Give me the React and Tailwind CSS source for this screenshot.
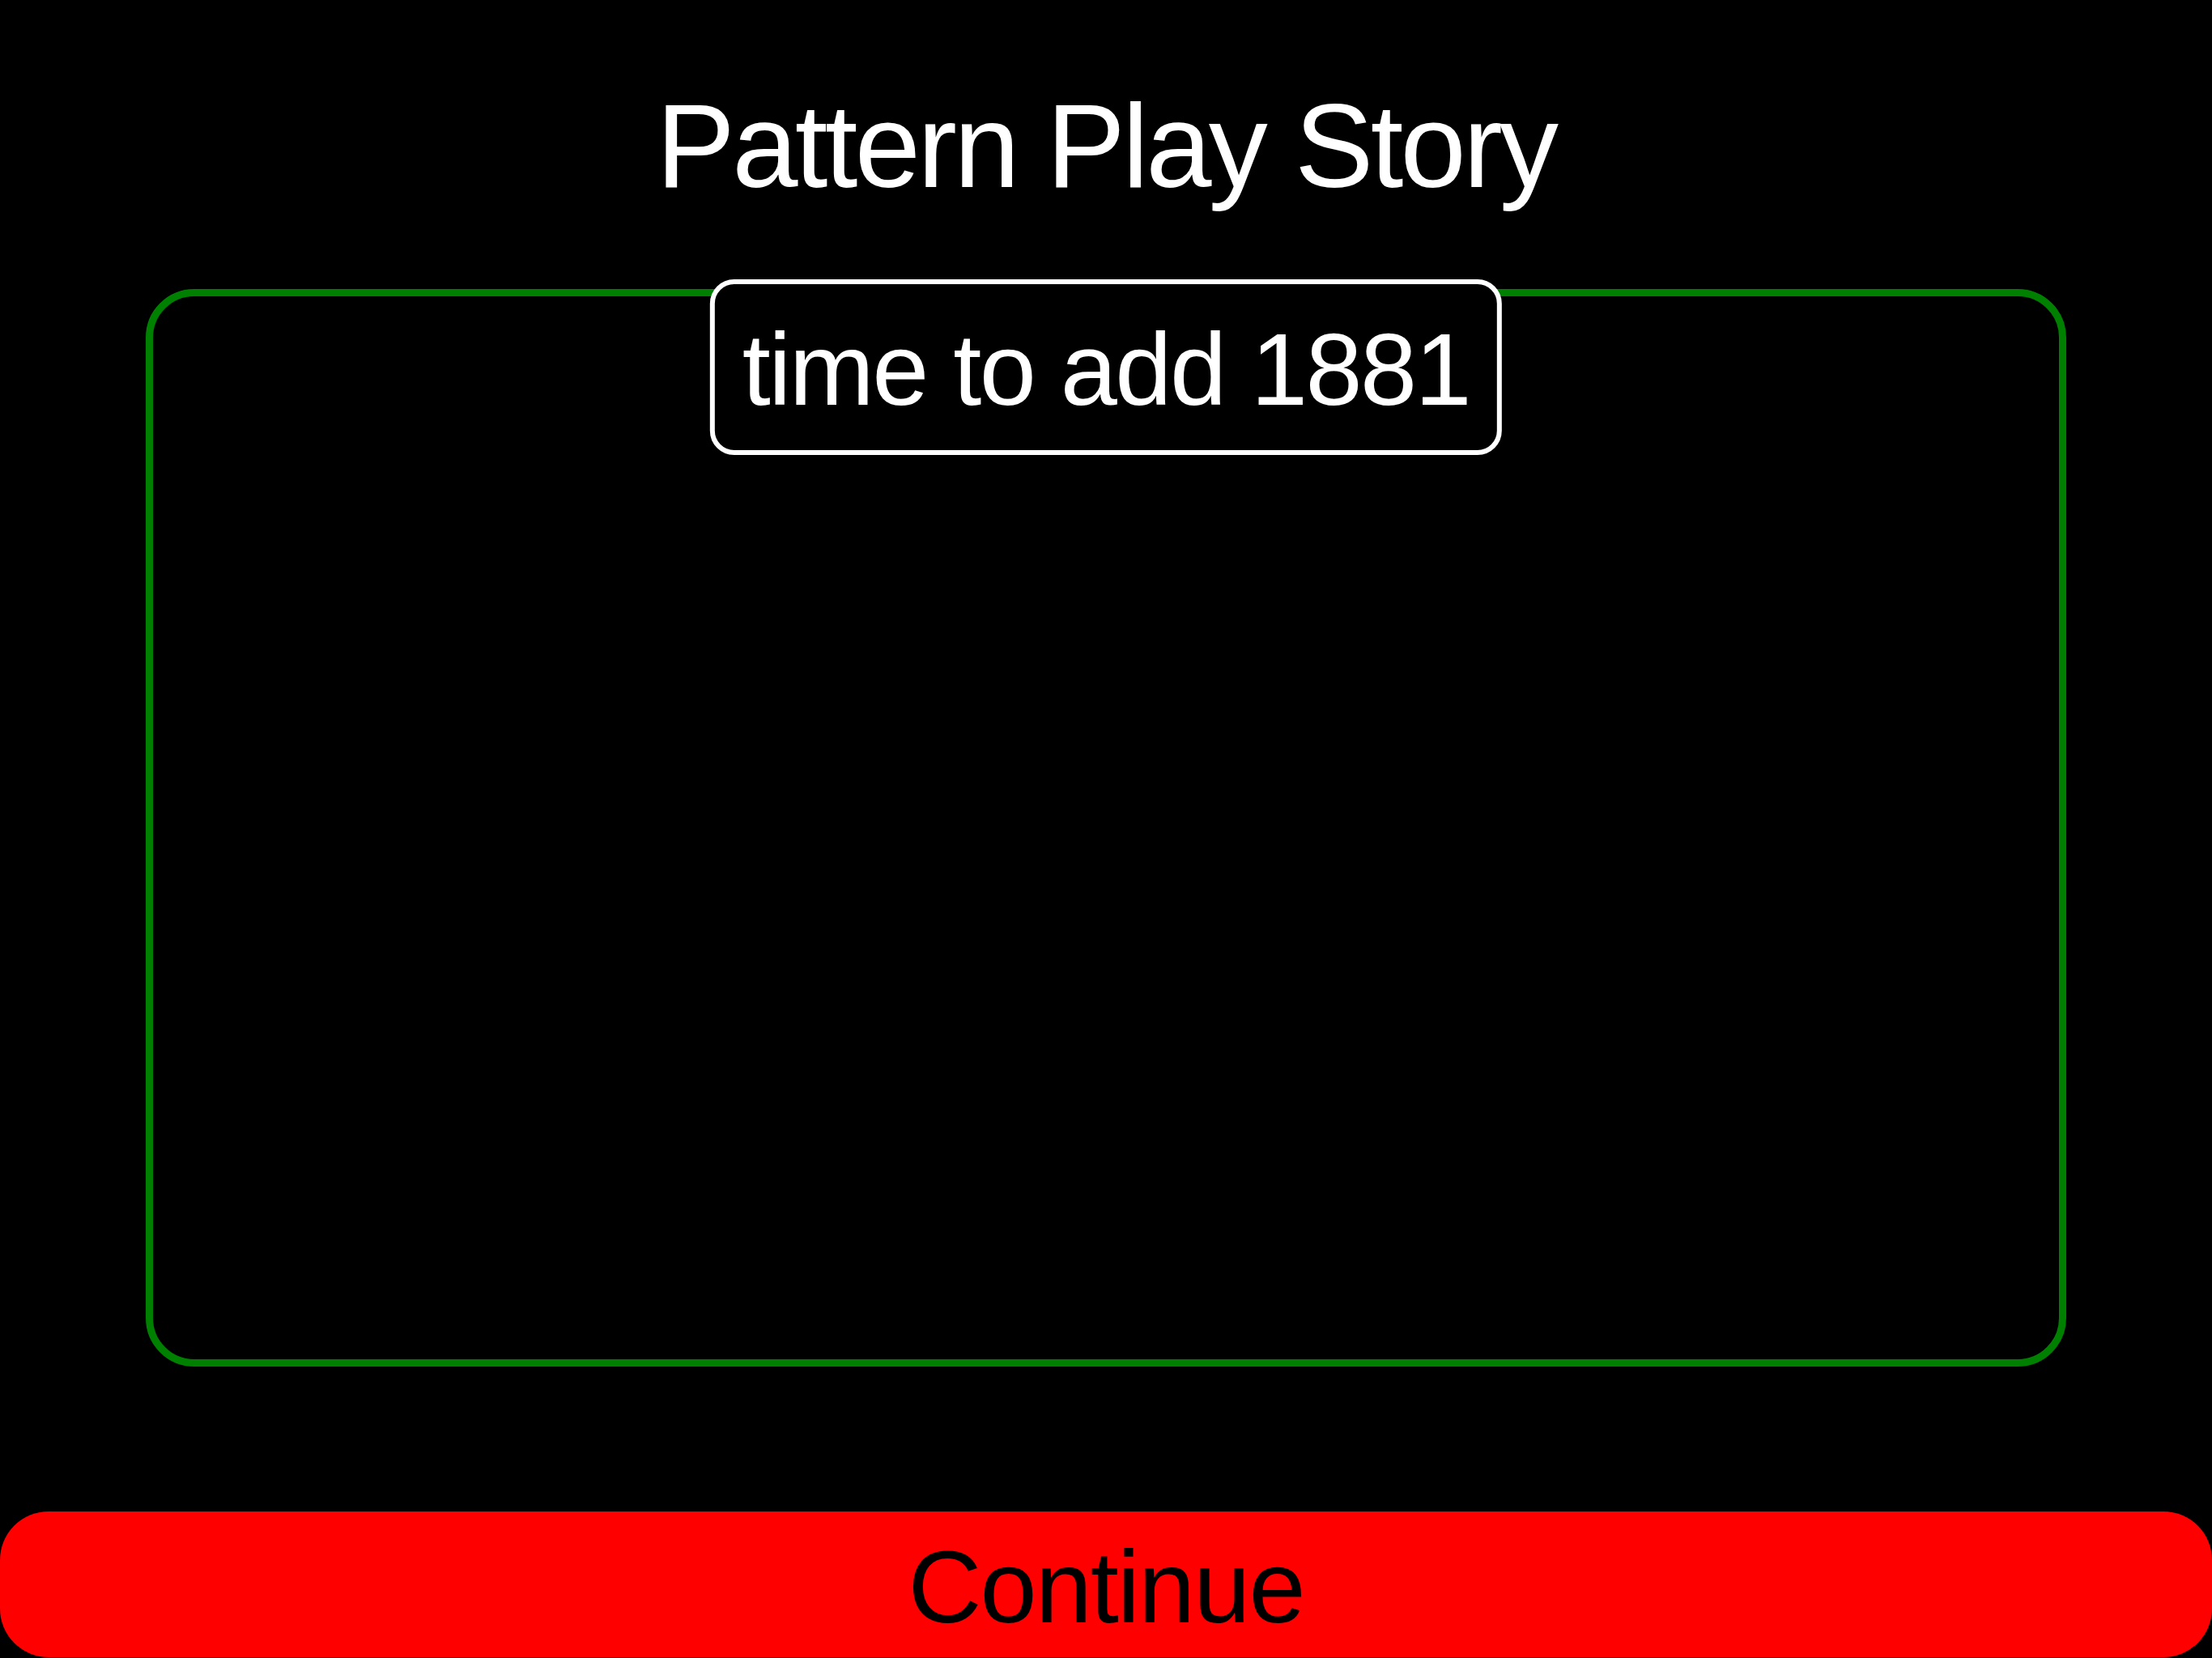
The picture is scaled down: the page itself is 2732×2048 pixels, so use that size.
export default function App() {
  return (
    <div className="flex h-[2048px] w-full flex-col items-center overflow-hidden bg-black font-['Liberation_Sans',Arial,sans-serif]">
      {/* title */}
      <h1 className="mt-[108px] whitespace-nowrap text-[146px] font-normal leading-none tracking-[-0.025em] text-white">
        Pattern Play Story
      </h1>

      {/* story panel */}
      <div className="relative mx-[180px] mt-[103px] h-[1331px] self-stretch rounded-[60px] border-[9px] border-[#008000]">
        <div className="absolute left-1/2 top-[-21px] -translate-x-1/2 whitespace-nowrap rounded-[30px] border-[6px] border-white bg-black px-[34px] pb-[36px] pt-[43px] text-[126px] leading-none tracking-[-0.02em] text-white">
          time to add 1881
        </div>
      </div>

      <button className="mt-[179px] flex h-[180px] w-full shrink-0 items-center justify-center rounded-[60px] bg-[#ff0000] pt-[8px] text-[126px] leading-none tracking-[-0.015em] text-black">
        Continue
      </button>
    </div>
  )
}
